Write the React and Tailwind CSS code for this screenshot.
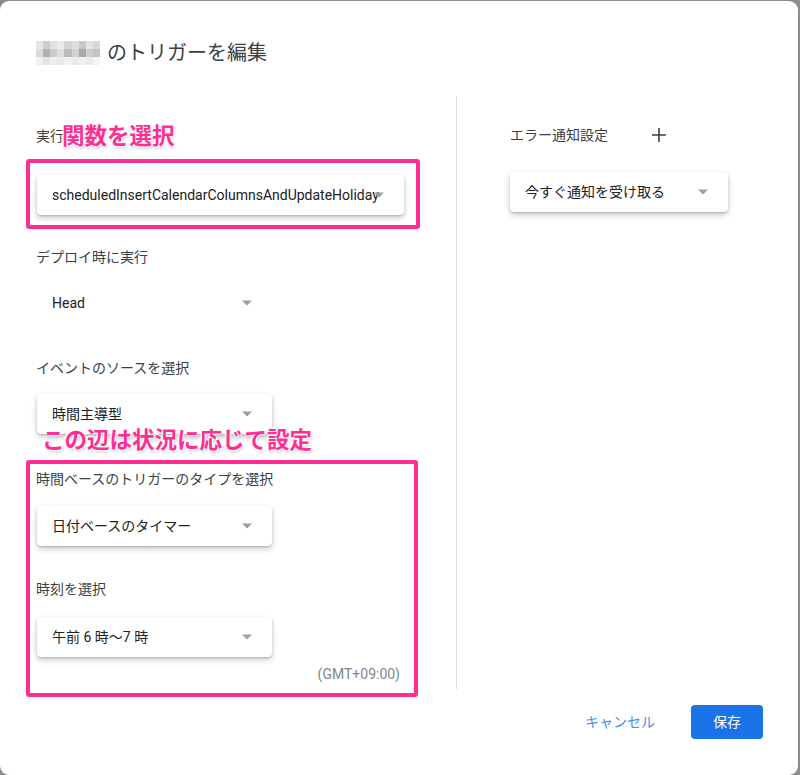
import React from "react";

const Arrow = () => (
  <span className="absolute right-[20px] top-1/2 -translate-y-1/2 w-0 h-0 border-l-[5px] border-r-[5px] border-t-[5px] border-l-transparent border-r-transparent border-t-[#9e9e9e]" />
);

const Select = ({ value, width = "w-[235px]", flat = false, className = "" }) => (
  <div
    className={`relative h-[40px] ${width} rounded-[4px] bg-white flex items-center pl-[15px] text-[14px] text-[#202124] whitespace-nowrap ${
      flat ? "" : "shadow-[0_1px_2px_rgba(0,0,0,0.18),0_3px_6px_rgba(0,0,0,0.2)]"
    } ${className}`}
  >
    <span>{value}</span>
    <Arrow />
  </div>
);

const Label = ({ children, className = "" }) => (
  <div className={`h-[20px] leading-[20px] text-[14px] text-[#3c4043] ${className}`}>{children}</div>
);

const mosaic = [
  ["#e6e6e6", "#cfcfcf", "#e2e2e2", "#ebebeb", "#d4d4d4", "#e0e0e0", "#c8c8c8", "#e4e4e4", "#d8d8d8"],
  ["#dadada", "#b0b0b0", "#cbcbcb", "#dedede", "#bcbcbc", "#d2d2d2", "#a8a8a8", "#cfcfcf", "#c4c4c4"],
  ["#f0f0f0", "#e4e4e4", "#eeeeee", "#e8e8e8", "#f1f1f1", "#ebebeb", "#efefef", "#eaeaea", "#f3f3f3"],
];

const Annotation = ({ children, className }) => (
  <div
    className={`absolute font-bold text-[22.5px] leading-none text-[#ff2e93] whitespace-nowrap [text-shadow:0_0_2px_#fff,0_0_2px_#fff,1px_1px_2px_#fff,-1px_-1px_2px_#fff,1px_2px_3px_rgba(0,0,0,0.25)] ${className}`}
  >
    {children}
  </div>
);

export default function App() {
  return (
    <div
      className="w-[800px] h-[775px] bg-[#8c8c8c] pt-px pr-[2px] overflow-hidden"
      style={{ fontFamily: "Roboto, 'Noto Sans CJK JP', sans-serif" }}
    >
      <div className="relative h-[774px] bg-white rounded-[9px] pt-[38px] pl-[36px]">
        {/* title */}
        <div className="flex items-center h-[28px]">
          <div className="flex flex-col w-[64px] h-[24px] mr-[7px]">
            {mosaic.map((row, i) => (
              <div key={i} className="flex flex-1">
                {row.map((c, j) => (
                  <div key={j} className="flex-1" style={{ backgroundColor: c }} />
                ))}
              </div>
            ))}
          </div>
          <span className="text-[20px] text-[#3c4043]">のトリガーを編集</span>
        </div>

        {/* columns */}
        <div className="flex mt-[29px]">
          <div className="w-[384px] pt-[30px]">
            <Label>実行</Label>
            <div className="-ml-[10px] w-[394px] mt-[13px] border-4 border-[#ff2e93] rounded-[3px] pl-[7px] pt-[12px] pb-[10px]">
              <Select value="scheduledInsertCalendarColumnsAndUpdateHoliday" width="w-[367px]" />
            </div>

            <Label className="mt-[18px]">デプロイ時に実行</Label>
            <Select value="Head" flat className="mt-[16px] ml-px" />

            <Label className="mt-[35px]">イベントのソースを選択</Label>
            <Select value="時間主導型" className="mt-[16px] ml-px" />

            <div className="-ml-[10px] w-[392px] mt-[26px] border-4 border-[#ff2e93] rounded-[3px] pl-[6px] pr-[14px] pt-[5px] pb-[9px]">
              <Label>時間ベースのトリガーのタイプを選択</Label>
              <Select value="日付ベースのタイマー" className="mt-[17px] ml-px" />
              <Label className="mt-[33px]">時刻を選択</Label>
              <Select value="午前 6 時〜7 時" className="mt-[18px] ml-px" />
              <div className="mt-[7px] h-[20px] leading-[20px] text-right text-[14px] text-[#80868b]">(GMT+09:00)</div>
            </div>
          </div>

          <div className="ml-[36px] w-px h-[593px] bg-[#dadce0]" />

          <div className="ml-[53px] pt-[29px]">
            <div className="flex items-center h-[20px]">
              <span className="text-[14px] text-[#3c4043]">エラー通知設定</span>
              <svg className="ml-[43px]" width="16" height="16" viewBox="0 0 16 16">
                <path d="M8 1v14M1 8h14" stroke="#3c4043" strokeWidth="1.6" />
              </svg>
            </div>
            <Select value="今すぐ通知を受け取る" width="w-[218px]" className="mt-[27px]" />
          </div>
        </div>

        {/* footer */}
        <div className="flex justify-end items-center pr-[35px] mt-[8px]">
          <button className="text-[14px] text-[#4b8bf0] mr-[36px]">キャンセル</button>
          <button className="w-[72px] h-[34px] rounded-[4px] bg-[#1a73e8] text-white text-[14px]">保存</button>
        </div>

        <Annotation className="left-[62px] top-[124px]">関数を選択</Annotation>
        <Annotation className="left-[42px] top-[428px]">この辺は状況に応じて設定</Annotation>
      </div>
    </div>
  );
}
